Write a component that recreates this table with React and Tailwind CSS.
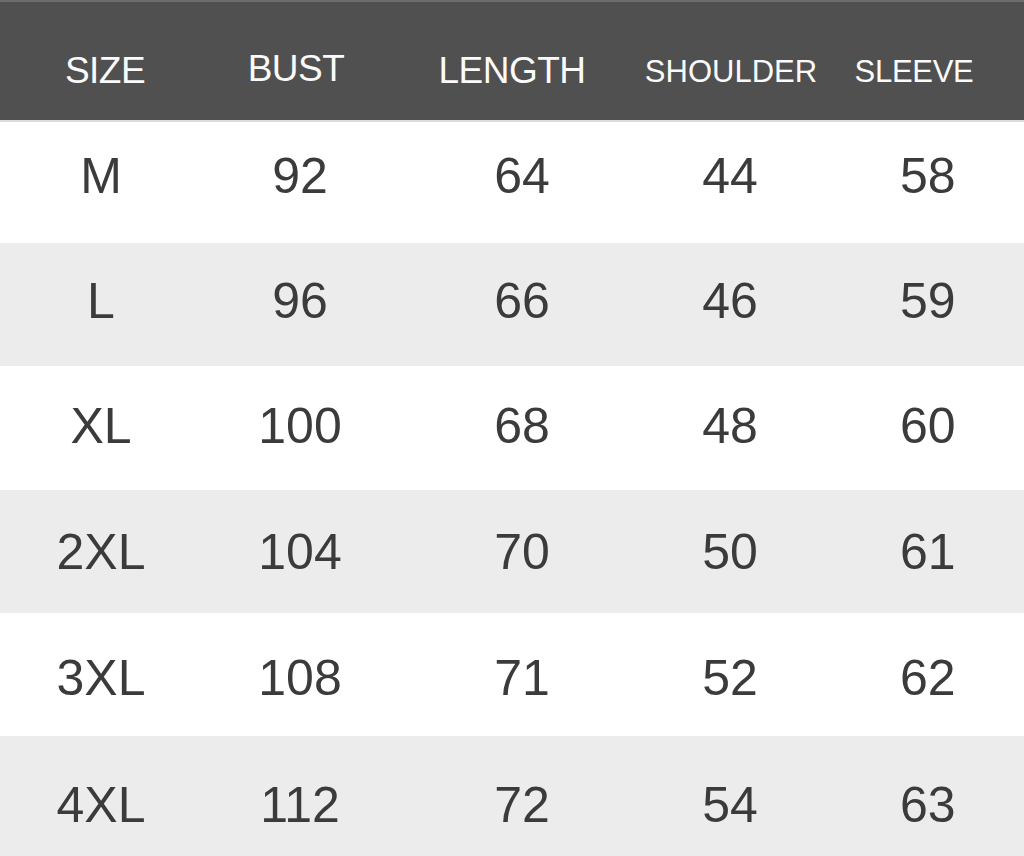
import React from 'react';

// size chart rows: bg, height and text offset follow the reference photo
const rows = [
  { size: 'M', bust: 92, length: 64, shoulder: 44, sleeve: 58, bg: 'bg-white border-t-2 border-[#dcdcdc]', h: 'h-[123px]', pt: 'pt-[29px]' },
  { size: 'L', bust: 96, length: 66, shoulder: 46, sleeve: 59, bg: 'bg-[#ececec]', h: 'h-[123px]', pt: 'pt-[33px]' },
  { size: 'XL', bust: 100, length: 68, shoulder: 48, sleeve: 60, bg: 'bg-white', h: 'h-[124px]', pt: 'pt-[35px]' },
  { size: '2XL', bust: 104, length: 70, shoulder: 50, sleeve: 61, bg: 'bg-[#ececec]', h: 'h-[123px]', pt: 'pt-[37px]' },
  { size: '3XL', bust: 108, length: 71, shoulder: 52, sleeve: 62, bg: 'bg-white', h: 'h-[123px]', pt: 'pt-[40px]' },
  { size: '4XL', bust: 112, length: 72, shoulder: 54, sleeve: 63, bg: 'bg-[#ececec]', h: 'h-[120px]', pt: 'pt-[44px]' },
];

const App = () => {
  return (
    <div className="w-[1024px] h-[856px] overflow-hidden bg-white font-['Liberation_Sans',Arial,sans-serif]">
      {/* header */}
      <div className="h-[120px] bg-[#505050] border-t-2 border-[#6c6c6c] grid grid-cols-[210px_172px_260px_178px_188px] text-[#fafafa] leading-none">
        <div className="flex justify-center pt-[50px] text-[37px] tracking-[-0.5px]">SIZE</div>
        <div className="flex justify-center pt-[48px] text-[37px] tracking-[-0.5px]">BUST</div>
        <div className="flex justify-center pt-[50px] text-[37px] tracking-[-0.5px]">LENGTH</div>
        <div className="flex justify-center pt-[54px] text-[31px]">SHOULDER</div>
        <div className="flex justify-center pt-[54px] text-[31px] tracking-[-0.3px]">SLEEVE</div>
      </div>

      {/* data rows */}
      {rows.map((r) => (
        <div
          key={r.size}
          className={`${r.bg} ${r.h} ${r.pt} grid grid-cols-[202px_196px_248px_168px_1fr] text-[50px] leading-none text-[#3b3b3b]`}
        >
          <div className="flex justify-center">{r.size}</div>
          <div className="flex justify-center">{r.bust}</div>
          <div className="flex justify-center">{r.length}</div>
          <div className="flex justify-center">{r.shoulder}</div>
          <div className="pl-[86px]">{r.sleeve}</div>
        </div>
      ))}
    </div>
  );
};

export default App;
